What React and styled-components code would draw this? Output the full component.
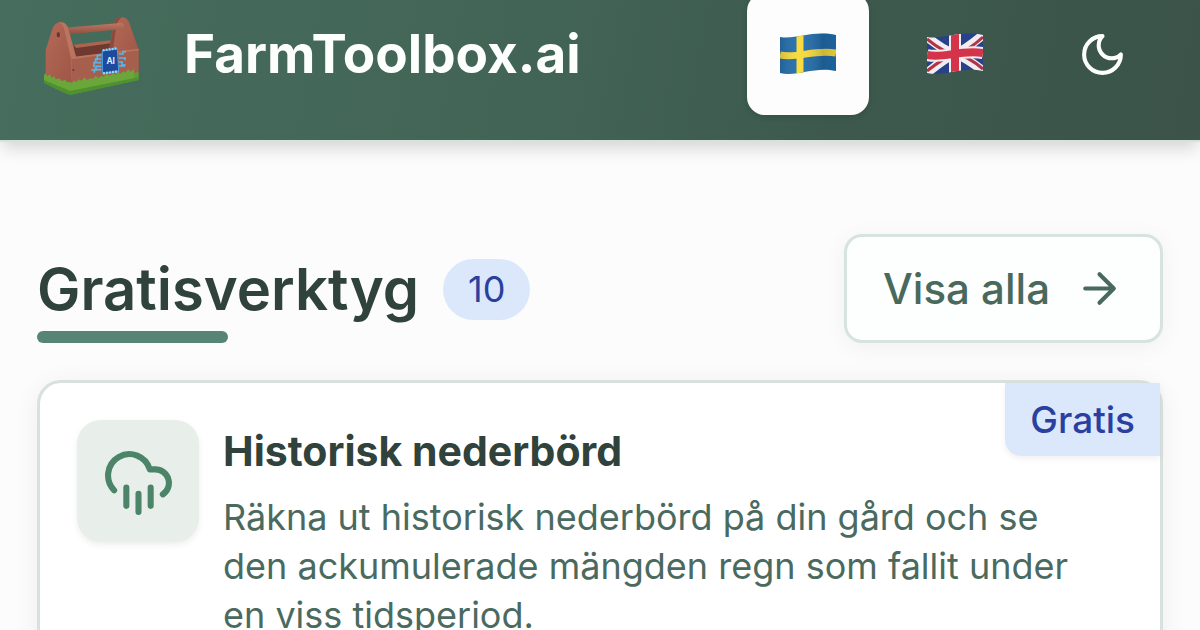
import React from "react";
import styled, { createGlobalStyle } from "styled-components";

const GlobalStyle = createGlobalStyle`
  *, *::before, *::after { box-sizing: border-box; }
  body {
    margin: 0;
    background: #fcfcfc;
    color: #2f423b;
    font-family: Inter, "Liberation Sans", sans-serif;
    overflow-x: hidden;
  }
  #root { display: flow-root; }
`;

const Header = styled.header`
  display: flex;
  align-items: center;
  justify-content: space-between;
  height: 174px;
  margin-top: -32px;
  padding: 0 37px;
  background: linear-gradient(100deg, #466d5d 0%, #426456 45%, #3d594e 70%, #3b5349 100%);
  border-bottom: 2px solid #d5e3dd;
  box-shadow: 0 8px 16px -2px rgba(0, 0, 0, 0.16);
`;

const Brand = styled.a`
  display: flex;
  align-items: center;
  gap: 37px;
  color: #fcfffd;
  text-decoration: none;
  font-size: 53px;
  font-weight: 700;
  line-height: 64px;
`;

const Logo = styled.svg`
  width: 110px;
  height: 110px;
`;

const Controls = styled.nav`
  display: flex;
  gap: 25px;
`;

const IconButton = styled.button`
  display: flex;
  align-items: center;
  justify-content: center;
  width: 122px;
  height: 122px;
  padding: 0;
  border: 0;
  border-radius: 18px;
  color: #fcfffd;
  background: ${(p) => (p.$active ? "#fcfdfc" : "transparent")};
  box-shadow: ${(p) => (p.$active ? "0 2px 6px rgba(0, 0, 0, 0.12)" : "none")};
`;

const Glyph = styled.svg`
  flex: none;
  width: ${(p) => p.$size}px;
  height: ${(p) => p.$size}px;
  fill: none;
  stroke: currentColor;
  stroke-width: 2;
  stroke-linecap: round;
  stroke-linejoin: round;
`;

const Flag = styled.svg`
  width: 60px;
  height: 44px;
`;

const Main = styled.main`
  padding: 92px 37px 37px;
`;

const SectionHead = styled.div`
  display: flex;
  align-items: center;
  justify-content: space-between;
  margin-bottom: 37px;
`;

const TitleGroup = styled.div`
  display: flex;
  align-items: center;
  align-self: flex-end;
  gap: 24px;
`;

const SectionTitle = styled.h2`
  margin: 0;
  font-size: 58px;
  font-weight: 600;
  line-height: 84px;

  &::after {
    content: "";
    display: block;
    width: 50%;
    height: 12px;
    border-radius: 6px;
    background: #588475;
  }
`;

const Count = styled.span`
  margin-bottom: 12px;
  padding: 0 25px;
  border-radius: 31px;
  background: #dbe8fc;
  color: #2a3f9f;
  font-size: 36px;
  line-height: 61px;
`;

const ShowAll = styled.button`
  display: flex;
  align-items: center;
  gap: 25px;
  height: 109px;
  padding: 0 36px;
  border: 3px solid #d7e3df;
  border-radius: 18px;
  background: #fdfefe;
  box-shadow: 0 4px 24px rgba(0, 0, 0, 0.05);
  color: #49695c;
  font-family: inherit;
  font-size: 42px;
  font-weight: 500;
`;

const Card = styled.article`
  position: relative;
  display: flex;
  align-items: flex-start;
  gap: 24px;
  padding: 37px;
  border: 3px solid #d9e1de;
  border-radius: 24px;
  background: #fff;
  box-shadow: 0 4px 28px rgba(0, 0, 0, 0.06);
`;

const CardIcon = styled.div`
  display: flex;
  flex: none;
  align-items: center;
  justify-content: center;
  width: 122px;
  height: 122px;
  border-radius: 24px;
  background: #e8efeb;
  box-shadow: 0 3px 6px rgba(0, 0, 0, 0.07);
  color: #4b8468;
`;

const CardBody = styled.div`
  flex: 1;
  min-width: 0;
  padding-right: 25px;
`;

const CardTitle = styled.h3`
  margin: 5px 0 16px;
  font-size: 41px;
  font-weight: 700;
  line-height: 52px;
`;

const CardText = styled.p`
  margin: 0;
  color: #4b6a5f;
  font-size: 36px;
  line-height: 49px;
`;

const FreeBadge = styled.span`
  position: absolute;
  top: 0;
  right: 0;
  padding: 0 25px;
  border-bottom-left-radius: 16px;
  background: #dbe8fb;
  box-shadow: 0 3px 6px rgba(0, 0, 0, 0.06);
  color: #2a3f9f;
  font-size: 37px;
  font-weight: 500;
  line-height: 73px;
`;

function ToolboxLogo() {
  return (
    <Logo viewBox="21 -3 330 330" aria-hidden="true">
      <defs>
        <linearGradient id="wood" x1="0" y1="0" x2="1" y2="1">
          <stop offset="0" stopColor="#b56a56" />
          <stop offset="1" stopColor="#9c5445" />
        </linearGradient>
        <linearGradient id="bar" x1="0" y1="0" x2="0" y2="1">
          <stop offset="0" stopColor="#bd7863" />
          <stop offset="1" stopColor="#8e4c3e" />
        </linearGradient>
      </defs>
      <path d="M42 226 L122 252 L326 212 V240 L122 284 Q112 284 42 248Z" fill="#5d9f35" />
      <path d="M132 138 L242 122 V164 L132 176Z" fill="#70392f" />
      <path d="M132 134 L242 121 V130 L138 144Z" fill="#ad6550" />
      <path d="M234 168 L252 68 Q258 51 276 52 Q290 52 297 66 L325 146 V216 L234 210Z" fill="url(#wood)" />
      <path d="M234 168 L252 68 Q258 51 276 52 Q262 62 259 78 L246 168Z" fill="#8c4b3e" />
      <path d="M98 84 L270 69 Q282 68 282 80 T270 88 L98 105Z" fill="url(#bar)" />
      <path d="M47 150 L68 84 Q76 66 94 67 Q108 68 114 84 L138 170 L126 254 L47 224Z" fill="url(#wood)" />
      <path d="M94 67 Q108 68 114 84 L138 170 L126 254 L122 172 L101 82 Q96 70 84 68Z" fill="#bb7460" />
      <ellipse cx="85" cy="104" rx="5" ry="8" fill="#68362d" />
      <path d="M124 172 L326 146 V216 L126 254Z" fill="#a65e4d" />
      <path d="M124 172 L326 146 V151 L124 178Z" fill="#bd745f" />
      <circle cx="130" cy="210" r="3" fill="#67342b" />
      <path d="M42 226 l5 -7 4 9 9 -5 5 10 7 -4 6 9 10 -3 7 8 11 -4 5 8 9 -2 6 5 5 -9 6 5 12 -8 5 5 10 -11 6 8 13 -6 5 3 9 -10 7 7 12 -7 5 4 10 -11 6 8 13 -8 5 5 9 -9 6 6 11 -8 5 4 9 -11 6 8 11 -7 V238 L122 274 L42 240Z" fill="#6aa63a" />
      <path d="M42 241 L120 273 L326 232 V240 L122 284 Q112 284 42 248Z" fill="#4f912f" />
      <g fill="none" stroke="#58b6ea" strokeWidth="5">
        <path d="M214 166 H202 V178 H194 M214 177 H197 V190 M214 188 H192 V202 M214 199 H198 V210 H184 M214 209 H193 V218" />
        <path d="M266 162 H279 V155 H288 M266 174 H285 V181 M266 186 H276 V195 H287 M266 198 H285" />
      </g>
      <path d="M217 152 L262 146 L266 214 L218 220Z" fill="#1d4a9d" stroke="#469ee0" strokeWidth="3" />
      <path d="M218 151 L262 145 M219 220 L265 214" stroke="#91dafa" strokeWidth="7" strokeDasharray="6 3" />
      <text x="242" y="193" textAnchor="middle" fontFamily="Inter, sans-serif" fontSize="25" fontWeight="700" fill="#d8f3ff">AI</text>
    </Logo>
  );
}

const wave = "M2 5 C18 8 34 -2 58 3 V39 C36 34 20 45 2 41Z";

function SwedishFlag() {
  return (
    <Flag viewBox="0 0 60 44" aria-hidden="true">
      <defs>
        <clipPath id="se-wave"><path d={wave} /></clipPath>
        <linearGradient id="se-shade">
          <stop offset="0" stopColor="#123" stopOpacity=".2" />
          <stop offset=".35" stopColor="#fff" stopOpacity=".05" />
          <stop offset=".75" stopColor="#123" stopOpacity=".2" />
          <stop offset="1" stopColor="#123" stopOpacity=".08" />
        </linearGradient>
      </defs>
      <g clipPath="url(#se-wave)">
        <path d="M0 0H60V44H0Z" fill="#1f6aa8" />
        <path d="M22 0V44" stroke="#f9da36" strokeWidth="7" />
        <path d="M2 23 C19 27 36 17 58 21" fill="none" stroke="#f9da36" strokeWidth="7" />
        <path d="M0 0H60V44H0Z" fill="url(#se-shade)" />
      </g>
    </Flag>
  );
}

function BritishFlag() {
  return (
    <Flag viewBox="0 0 60 44" aria-hidden="true">
      <defs>
        <clipPath id="gb-wave"><path d={wave} /></clipPath>
      </defs>
      <g clipPath="url(#gb-wave)" fill="none">
        <path d="M0 0H60V44H0Z" fill="#27418b" />
        <path d="M2 5 Q18 18 30 22 T58 39 M2 41 Q20 26 30 22 T58 3" stroke="#f3edf1" strokeWidth="9" />
        <path d="M2 7 Q18 20 30 23 M58 37 Q44 25 30 21 M2 39 Q20 25 30 21 M58 5 Q44 18 30 23" stroke="#b03545" strokeWidth="3" />
        <path d="M30 0V44 M2 23 C19 27 36 17 58 21" stroke="#f3edf1" strokeWidth="12" />
        <path d="M30 0V44 M2 23 C19 27 36 17 58 21" stroke="#d4344a" strokeWidth="8" />
      </g>
    </Flag>
  );
}

export default function App() {
  return (
    <>
      <GlobalStyle />
      <Header>
        <Brand href="#">
          <ToolboxLogo />
          FarmToolbox.ai
        </Brand>
        <Controls>
          <IconButton $active aria-label="Svenska"><SwedishFlag /></IconButton>
          <IconButton aria-label="English"><BritishFlag /></IconButton>
          <IconButton aria-label="Mörkt läge">
            <Glyph $size={49} viewBox="0 0 24 24">
              <path d="M12 3a6 6 0 0 0 9 9 9 9 0 1 1-9-9Z" />
            </Glyph>
          </IconButton>
        </Controls>
      </Header>
      <Main>
        <SectionHead>
          <TitleGroup>
            <SectionTitle>Gratisverktyg</SectionTitle>
            <Count>10</Count>
          </TitleGroup>
          <ShowAll>
            Visa alla
            <Glyph $size={49} viewBox="0 0 24 24">
              <path d="M5 12h14M12 5l7 7-7 7" />
            </Glyph>
          </ShowAll>
        </SectionHead>
        <Card>
          <CardIcon>
            <Glyph $size={73} viewBox="0 0 24 24">
              <path d="M4 14.899A7 7 0 1 1 15.71 8h1.79a4.5 4.5 0 0 1 2.5 8.242M16 14v6M8 14v6M12 16v6" />
            </Glyph>
          </CardIcon>
          <CardBody>
            <CardTitle>Historisk nederbörd</CardTitle>
            <CardText>
              Räkna ut historisk nederbörd på din gård och se den ackumulerade
              mängden regn som fallit under en viss tidsperiod.
            </CardText>
          </CardBody>
          <FreeBadge>Gratis</FreeBadge>
        </Card>
      </Main>
    </>
  );
}
